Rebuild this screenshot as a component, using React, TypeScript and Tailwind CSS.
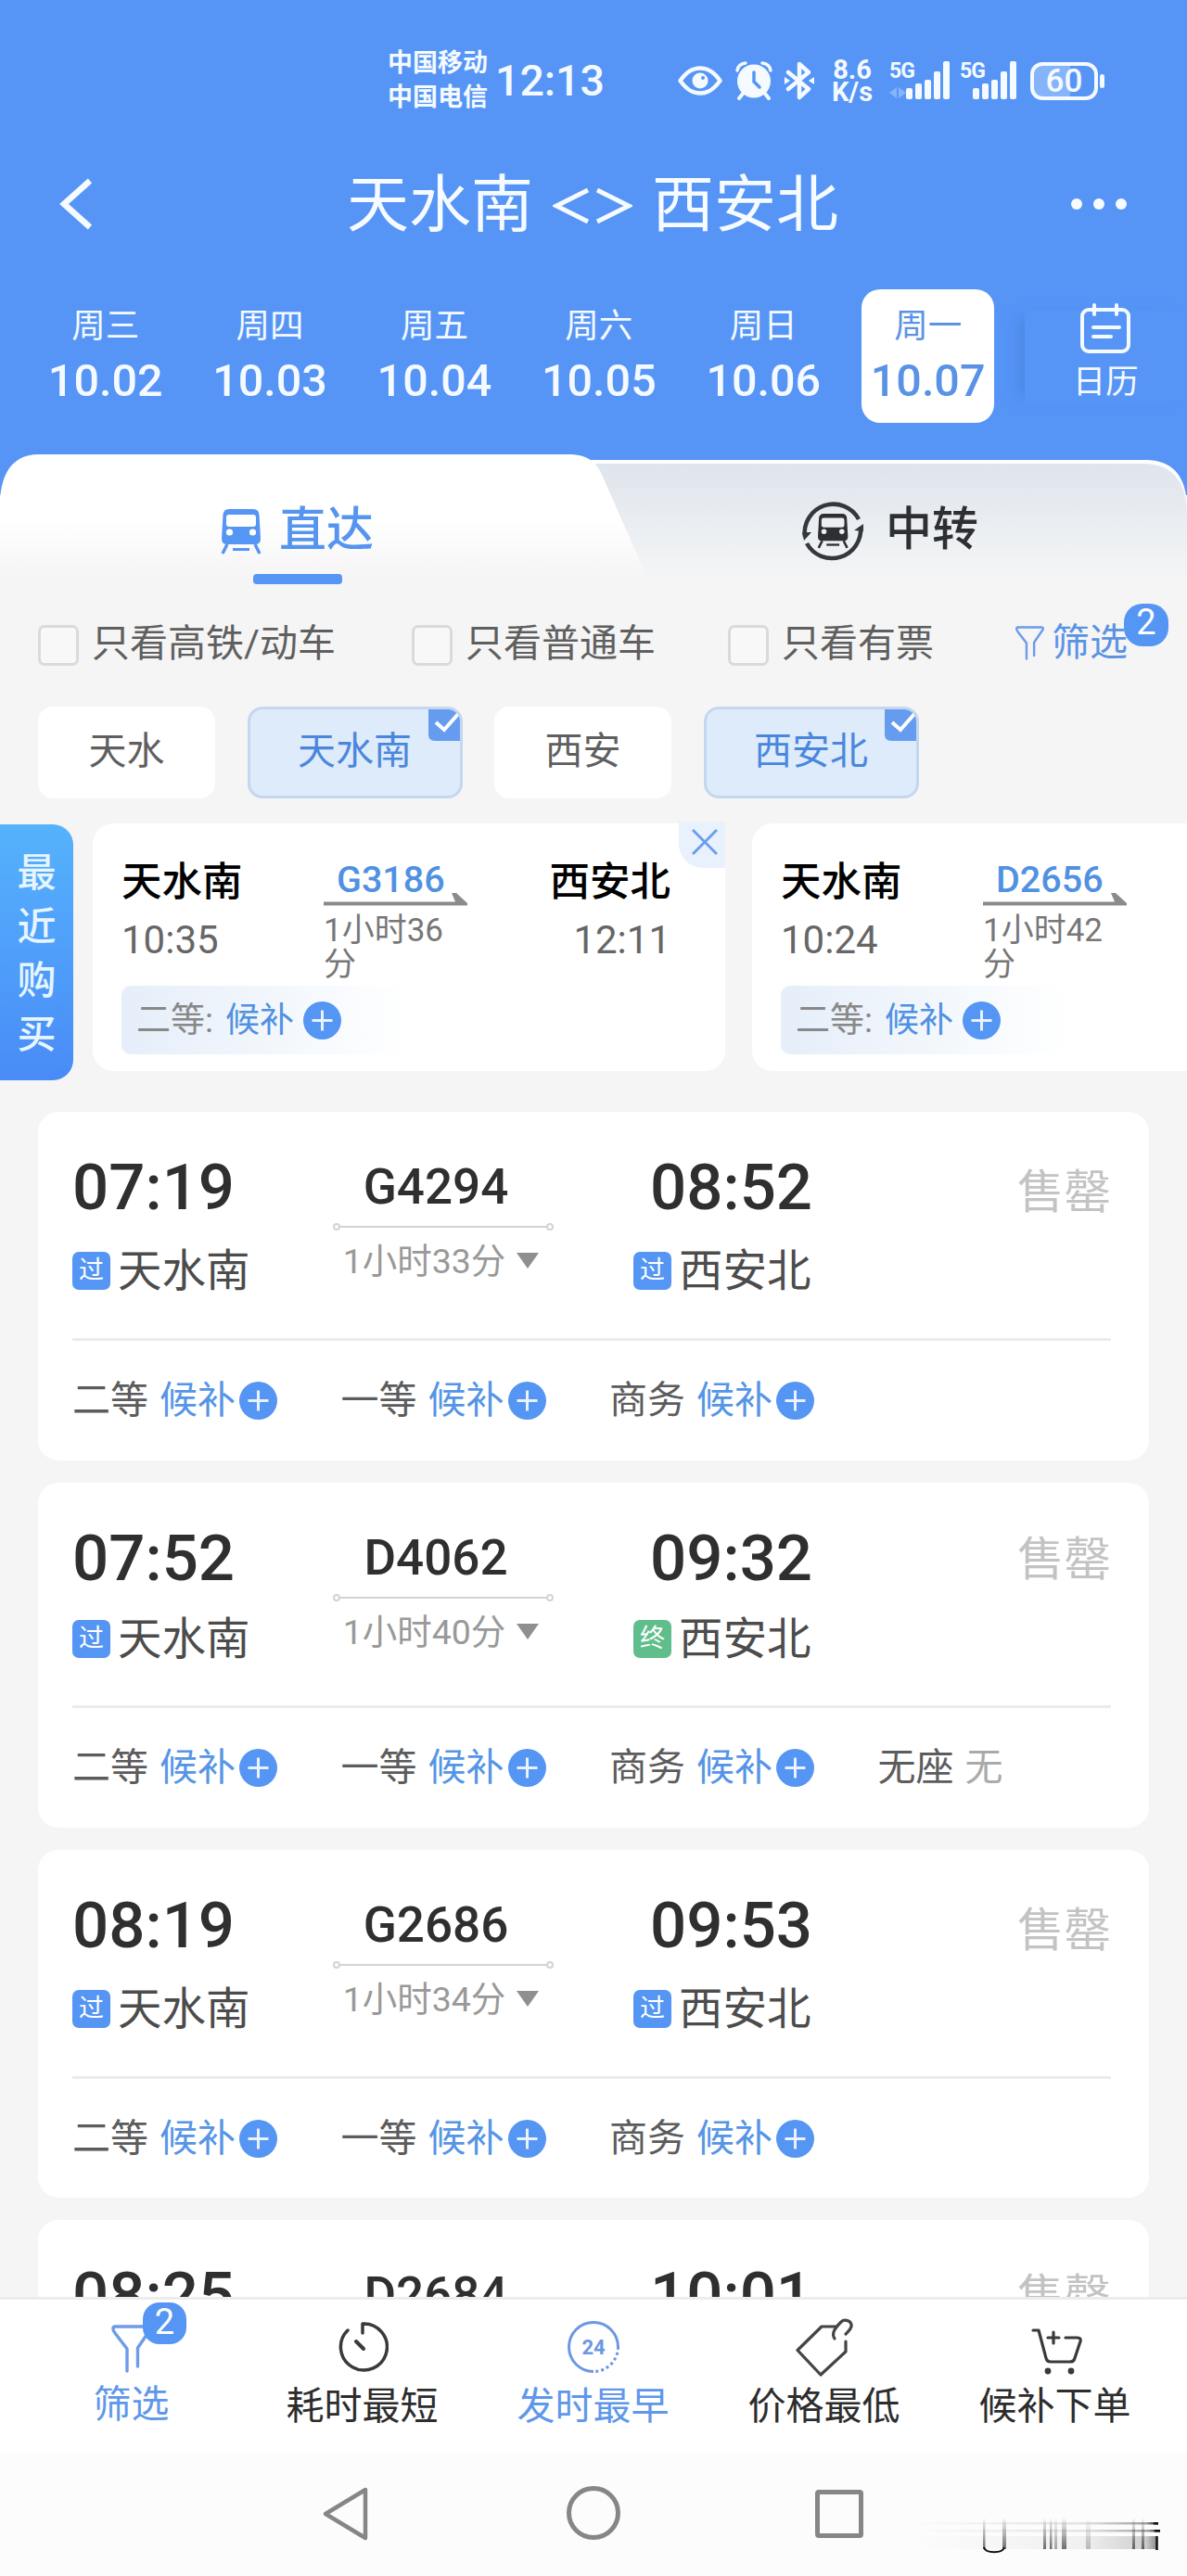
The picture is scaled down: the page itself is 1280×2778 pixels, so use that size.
import { ReactNode } from 'react';

interface Seat {
  name: string;
  waitlist: boolean;
}

interface Train {
  code: string;
  depart: string;
  arrive: string;
  duration: string;
  terminal: boolean;
  compact: boolean;
  height: string;
  seats: Seat[];
}

const baseSeats: Seat[] = [
  { name: '二等', waitlist: true },
  { name: '一等', waitlist: true },
  { name: '商务', waitlist: true },
];

const trains: Train[] = [
  { code: 'G4294', depart: '07:19', arrive: '08:52', duration: '1小时33分', terminal: false, compact: false, height: 'h-[376px]', seats: baseSeats },
  { code: 'D4062', depart: '07:52', arrive: '09:32', duration: '1小时40分', terminal: true, compact: true, height: 'h-[372px]', seats: [...baseSeats, { name: '无座', waitlist: false }] },
  { code: 'G2686', depart: '08:19', arrive: '09:53', duration: '1小时34分', terminal: false, compact: false, height: 'h-[375px]', seats: baseSeats },
  { code: 'D2684', depart: '08:25', arrive: '10:01', duration: '1小时36分', terminal: false, compact: true, height: 'h-[376px]', seats: baseSeats },
];

const days = [
  { week: '周三', date: '10.02' },
  { week: '周四', date: '10.03' },
  { week: '周五', date: '10.04' },
  { week: '周六', date: '10.05' },
  { week: '周日', date: '10.06' },
  { week: '周一', date: '10.07', active: true },
];

const recent = [
  { code: 'G3186', depart: '10:35', arrive: '12:11', duration: '1小时36分', closable: true },
  { code: 'D2656', depart: '10:24', arrive: '12:06', duration: '1小时42分', closable: false },
];

const PlusIcon = () => (
  <svg width="41" height="41" viewBox="0 0 41 41" className="shrink-0">
    <circle cx="20.5" cy="20.5" r="20.5" fill="#5595f3" />
    <path d="M9.5 20.5h22M20.5 9.5v22" stroke="#e9f3ff" strokeWidth="3" />
  </svg>
);

const FunnelIcon = ({ className }: { className: string }) => (
  <svg viewBox="0 0 44 52" fill="none" stroke="#6e9bea" strokeWidth="3.4" strokeLinecap="round" strokeLinejoin="round" className={className}>
    <path d="M17 50V26L4 9C1 5 1.500 2 4 2h36c2 0 3 2 1.500 4L28.500 25v20" />
  </svg>
);

const TrainShape = ({ color, hole }: { color: string; hole: string }) => (
  <g>
    <path d="M8 0h26q6 0 6.500 6L42 32q0 6-6 6H6q-6 0-6-6L1.500 6Q2 0 8 0z" fill={color} />
    <rect x="5" y="6" width="32" height="13" rx="3" fill={hole} />
    <circle cx="8.500" cy="25" r="3.600" fill={hole} />
    <circle cx="33.500" cy="25" r="3.600" fill={hole} />
    <path d="M6 38L1 48M36 38l5 10" stroke={color} strokeWidth="3.400" />
    <path d="M12 43.500h18" stroke={color} strokeWidth="3" />
  </g>
);

const SignalBars = () => (
  <svg width="47" height="42" viewBox="0 0 47 42" fill="#f4faff">
    <rect x="0" y="29" width="7" height="12" rx="2" />
    <rect x="10" y="24" width="7" height="17" rx="2" />
    <rect x="20" y="20" width="7" height="21" rx="2" />
    <rect x="30" y="11" width="7" height="30" rx="2" />
    <rect x="40" y="0" width="7" height="41" rx="2" />
  </svg>
);

const StatusBar = () => (
  <div className="flex h-[152px] items-center pt-[22px] pl-[418px] text-[#f4faff]">
    <div className="w-[110px] text-[27px] leading-[37px] font-bold whitespace-nowrap">
      <div>中国移动</div>
      <div>中国电信</div>
    </div>
    <div className="ml-[6px] w-[124px] text-[46.500px] leading-none font-medium">12:13</div>
    <svg width="48" height="42" viewBox="0 0 48 42" className="ml-[73px]" fill="none">
      <path d="M2.500 21C11 9 18 7.500 24 7.500S37 9 45.500 21C37 33 30 34.500 24 34.500S11 33 2.500 21z" stroke="#f4faff" strokeWidth="4.500" strokeLinejoin="round" />
      <circle cx="24" cy="21" r="8.500" fill="#f4faff" />
      <circle cx="27" cy="18" r="2" fill="#5695f6" />
    </svg>
    <svg width="40" height="42" viewBox="0 0 40 42" className="ml-[14px]" fill="none">
      <circle cx="20" cy="21.500" r="18" fill="#f4faff" />
      <path d="M2 10Q3 3 11 2M38 10Q37 3 29 2" stroke="#f4faff" strokeWidth="3.500" strokeLinecap="round" />
      <path d="M8 35l-4 5M32 35l4 5" stroke="#f4faff" strokeWidth="4" strokeLinecap="round" />
      <path d="M20 12v10l6 6" stroke="#5695f6" strokeWidth="3.500" strokeLinecap="round" />
    </svg>
    <svg width="32" height="42" viewBox="0 0 32 42" className="ml-[13px]" fill="none">
      <path d="M4 12l22 18-10 9V3l10 9L4 30" stroke="#f4faff" strokeWidth="4.500" strokeLinejoin="round" strokeLinecap="round" />
      <path d="M0 17l6 4-6 4zM32 17l-6 4 6 4z" fill="#f4faff" />
    </svg>
    <div className="ml-[16px] w-[50px] text-center text-[29px] leading-[24px] font-bold">
      <div>8.6</div>
      <div>K/s</div>
    </div>
    <div className="relative ml-[15px] flex w-[65px] justify-end">
      <SignalBars />
      <span className="absolute top-[-1px] left-0 text-[23px] leading-[24px] font-bold tracking-[-1px]">5G</span>
      <svg width="18" height="12" viewBox="0 0 18 12" className="absolute bottom-[2px] left-0">
        <path d="M8 0v12L0 6zM10 0v12l8-6z" fill="#86b4fa" />
      </svg>
    </div>
    <div className="relative ml-[11px] flex w-[61px] justify-end">
      <SignalBars />
      <span className="absolute top-[-1px] left-0 text-[23px] leading-[24px] font-bold tracking-[-1px]">5G</span>
    </div>
    <div className="ml-[15px] flex items-center">
      <div className="flex h-[41px] w-[73px] items-center justify-center rounded-[13px] border-4 border-[#f4faff] bg-linear-to-r from-[#86b4fa] from-60% to-[#5695f6] to-60% text-[35px] leading-none font-medium">
        60
      </div>
      <div className="ml-[2px] h-[15px] w-[5px] rounded-full bg-[#f4faff]"></div>
    </div>
  </div>
);

const Header = () => (
  <header className="h-[489px] shrink-0 bg-[#5695f6]">
    <StatusBar />
    <div className="flex h-[136px] items-center pl-[63px] text-[#f6fbff]">
      <svg width="38" height="56" viewBox="0 0 38 56" fill="none" stroke="currentColor" strokeWidth="6.500">
        <path d="M34 3L6 28l28 25" />
      </svg>
      <h1 className="ml-[273px] flex items-center pt-[3px] text-[67px] leading-none">
        <span>天水南</span>
        <svg width="86" height="38" viewBox="0 0 86 38" className="mx-[21px]" fill="none" stroke="currentColor" strokeWidth="5">
          <path d="M38 2L4 19l34 17M48 2l34 17-34 17" />
        </svg>
        <span>西安北</span>
      </h1>
      <div className="mr-[65px] ml-auto flex gap-[12px]">
        <i className="size-[12px] rounded-full bg-current"></i>
        <i className="size-[12px] rounded-full bg-current"></i>
        <i className="size-[12px] rounded-full bg-current"></i>
      </div>
    </div>
    <div className="flex pt-[24px] pl-[25px] text-[#f4faff]">
      {days.map((day) => (
        <div key={day.date} className="flex w-[177.400px] justify-center">
          <div className={`flex h-[144px] w-[143px] flex-col items-center rounded-[20px] pt-[18px] ${day.active ? 'bg-white text-[#5a93e6]' : ''}`}>
            <span className="text-[36.500px] leading-[44px]">{day.week}</span>
            <span className="mt-[12px] text-[48.500px] leading-[50px] font-medium">{day.date}</span>
          </div>
        </div>
      ))}
      <div className="mt-[23px] ml-[16px] h-[100px] w-[174px] shrink-0 bg-[#5695f6] shadow-[-14px_0_16px_-8px_#4a87e2]">
        <div className="flex flex-col items-center">
          <svg width="54" height="54" viewBox="0 0 54 54" fill="none" stroke="currentColor" strokeWidth="4" strokeLinecap="round" className="-mt-[8px]">
            <rect x="2" y="7" width="50" height="45" rx="7" />
            <path d="M15 2v10M39 2v10M14 26h28M14 36h19" />
          </svg>
          <span className="mt-[9px] text-[35.500px] leading-[44px]">日历</span>
        </div>
      </div>
    </div>
  </header>
);

const RouteTabs = () => (
  <div className="relative isolate flex h-[141px] shrink-0 bg-[#5695f6]">
    <svg viewBox="0 0 1280 141" className="absolute inset-0 -z-10 h-full w-full">
      <defs>
        <linearGradient id="tabLeft" x1="0" y1="0" x2="0" y2="1">
          <stop offset="0.500" stopColor="#ffffff" />
          <stop offset="0.960" stopColor="#f5f5f5" />
        </linearGradient>
        <linearGradient id="tabRight" x1="0" y1="0" x2="0" y2="1">
          <stop offset="0" stopColor="#dfe5ed" />
          <stop offset="1" stopColor="#f4f5f6" />
        </linearGradient>
      </defs>
      <rect y="45" width="1280" height="96" fill="#f5f5f5" />
      <path d="M500 7H1238Q1280 9 1280 60V141H500z" fill="#fff" />
      <path d="M500 11H1236Q1277 13 1280 60V134H500z" fill="url(#tabRight)" />
      <path d="M0 50C2 18 16 1 42 1H612C634 1 643 9 649 23L698 134V141H0z" fill="url(#tabLeft)" />
      <rect y="134" width="1280" height="7" fill="#f5f5f5" />
    </svg>
    <div className="relative flex h-[129px] w-[640px] items-center pt-[35px] pl-[238px] text-[#5595f0]">
      <svg width="44" height="50" viewBox="-1 -1 44 50" className="mt-[3px]">
        <TrainShape color="#5595f3" hole="#ffffff" />
      </svg>
      <span className="ml-[19px] text-[51px] leading-none font-medium">直达</span>
      <i className="absolute bottom-[-12px] left-[273px] h-[11px] w-[96px] rounded-[4px] bg-[#5595f3]"></i>
    </div>
    <div className="flex h-[129px] flex-1 items-center pt-[35px] pl-[224px] text-[#2d2f32]">
      <svg width="68" height="68" viewBox="0 0 68 68" fill="none" className="mt-[3px]">
        <path d="M4 40A31 31 0 0 1 62 21" stroke="#34373b" strokeWidth="4.500" />
        <path d="M64 29A31 31 0 0 1 6 47" stroke="#34373b" strokeWidth="4.500" />
        <path d="M1 35l10 0-8 9zM67 26v8l-10-1z" fill="#34373b" />
        <g transform="translate(18 15) scale(0.770)">
          <TrainShape color="#2d2f32" hole="#eceff3" />
        </g>
      </svg>
      <span className="ml-[23px] text-[50px] leading-none font-medium">中转</span>
    </div>
  </div>
);

const CheckOption = ({ label, className }: { label: string; className: string }) => (
  <label className={`flex items-center ${className}`}>
    <i className="mr-[14px] size-[44px] rounded-[7px] border-[3px] border-[#dadada] bg-[#f8f8f8]"></i>
    <span className="pb-[3px]">{label}</span>
  </label>
);

const FilterBar = () => (
  <div className="flex h-[132px] shrink-0 items-center pl-[41px] text-[41px] leading-none text-[#5f5f5f]">
    <CheckOption label="只看高铁/动车" className="w-[403px]" />
    <CheckOption label="只看普通车" className="w-[341px]" />
    <CheckOption label="只看有票" className="w-[309px]" />
    <div className="relative flex items-center pb-[5px] text-[#5a93e4]">
      <FunnelIcon className="h-[37px] w-[33px]" />
      <span className="ml-[7px]">筛选</span>
      <span className="absolute -top-[22px] left-[118px] flex h-[46px] w-[48px] items-center justify-center rounded-[20px] bg-[#5595f3] pb-[6px] text-[38px] text-white">2</span>
    </div>
  </div>
);

const Chip = ({ label, active }: { label: string; active?: boolean }) =>
  active ? (
    <div className="relative flex h-[99px] w-[232px] justify-center overflow-hidden rounded-[16px] border-[3px] border-[#c4d7ee] bg-[#deebfa] pt-[23px] text-[#4a87dc]">
      {label}
      <svg width="34" height="34" viewBox="0 0 34 34" className="absolute top-0 right-0">
        <path d="M0 0h34v34H7q-7 0-7-7z" fill="#669cf0" />
        <path d="M8 14l9 8L32 5" fill="none" stroke="#fff" strokeWidth="4" />
      </svg>
    </div>
  ) : (
    <div className="flex h-[99px] w-[191px] justify-center rounded-[16px] bg-white pt-[26px] text-[#5f5f5f]">{label}</div>
  );

const RecentCard = ({ item }: { item: (typeof recent)[number] }) => (
  <div className="relative h-[267px] w-[682px] shrink-0 rounded-[22px] bg-white pt-[41px] pr-[59px] pl-[31px]">
    {item.closable && (
      <div className="absolute -top-[2px] right-0 flex h-[50px] w-[50px] items-center justify-center rounded-bl-[26px] bg-[#e9f1fd] pb-[6px] pl-[5px]">
        <svg width="28" height="28" viewBox="0 0 28 28" stroke="#6a9eee" strokeWidth="3">
          <path d="M1 1l26 26M27 1L1 27" />
        </svg>
      </div>
    )}
    <div className="flex h-[134px]">
      <div className="w-[218px]">
        <div className="text-[43.500px] leading-[46px] font-medium text-black">天水南</div>
        <div className="mt-[16px] text-[42px] leading-[46px] text-[#666]">{item.depart}</div>
      </div>
      <div className="w-[155px]">
        <div className="pl-[14px] text-[39.500px] leading-[40px] font-medium text-[#5091e2]">{item.code}</div>
        <svg width="155" height="14" viewBox="0 0 155 14" className="-mt-[6px]">
          <path d="M0 9.500H142L138 0h5l12 11v2.500H0z" fill="#8b8b8b" />
        </svg>
        <div className="mt-[8px] w-[130px] text-[35px] leading-[37px] break-all text-[#777]">{item.duration}</div>
      </div>
      <div className="flex-1 text-right">
        <div className="text-[43.500px] leading-[46px] font-medium text-black">西安北</div>
        <div className="mt-[16px] text-[42px] leading-[46px] text-[#666]">{item.arrive}</div>
      </div>
    </div>
    <div className="flex h-[74px] w-[310px] items-center rounded-[10px] bg-linear-to-r from-[#e5eef9] to-white pl-[16px] text-[37px] leading-none">
      <span className="text-[#888]">二等:</span>
      <span className="ml-[13px] text-[#5091e2]">候补</span>
      <span className="ml-[10px]">
        <PlusIcon />
      </span>
    </div>
  </div>
);

const RecentPurchases = () => (
  <div className="flex h-[311px] shrink-0 items-start overflow-hidden pt-[27px]">
    <div className="mt-[1px] flex h-[276px] w-[79px] shrink-0 flex-col items-center rounded-r-[22px] bg-linear-to-b from-[#56b2fc] to-[#498bf7] pt-[24px] text-[42px] leading-[58px] font-medium text-[#e6f5ff]">
      {['最', '近', '购', '买'].map((char) => (
        <span key={char}>{char}</span>
      ))}
    </div>
    <div className="ml-[21px] flex gap-[29px]">
      {recent.map((item) => (
        <RecentCard key={item.code} item={item} />
      ))}
    </div>
  </div>
);

const Station = ({ name, terminal }: { name: string; terminal?: boolean }) => (
  <div className="flex h-[48px] items-center">
    <span className={`flex size-[41px] items-center justify-center rounded-[7px] text-[27px] leading-none text-white ${terminal ? 'bg-[#5fbe8b]' : 'bg-[#5595f3]'}`}>
      {terminal ? '终' : '过'}
    </span>
    <span className="mt-[1px] ml-[8px] text-[47.500px] leading-[48px] text-[#4c4c4c]">{name}</span>
  </div>
);

const TrainCard = ({ train }: { train: Train }) => (
  <div className={`shrink-0 rounded-[22px] bg-white pr-[41px] pl-[37px] ${train.height}`}>
    <div className={`flex border-b-[3px] border-[#ebebeb] pt-[47px] ${train.compact ? 'h-[243px]' : 'h-[247px]'}`}>
      <div className="w-[281px]">
        <div className="text-[69px] leading-[70px] font-medium text-[#2f2f2f]">{train.depart}</div>
        <div className={train.compact ? 'mt-[27px]' : 'mt-[30px]'}>
          <Station name="天水南" />
        </div>
      </div>
      <div className="flex w-[238px] flex-col items-center">
        <div className="pr-[16px] text-[53px] leading-[68px] font-medium text-[#2f2f2f]">{train.code}</div>
        <svg width="238" height="8" viewBox="0 0 238 8" fill="#fff" stroke="#d3d3d3" strokeWidth="2" className="mt-[5px]">
          <path d="M6 4h226" />
          <circle cx="4" cy="4" r="3" />
          <circle cx="234" cy="4" r="3" />
        </svg>
        <div className="mt-[11px] flex items-center pr-[4px] text-[37.500px] leading-[44px] text-[#999]">
          <span>{train.duration}</span>
          <svg width="26" height="18" viewBox="0 0 24 18" className="ml-[11px]">
            <path d="M0 0h24L12 17z" fill="#8f8f8f" />
          </svg>
        </div>
      </div>
      <div className="ml-[86px]">
        <div className="pl-[18px] text-[69px] leading-[70px] font-medium text-[#2f2f2f]">{train.arrive}</div>
        <div className={train.compact ? 'mt-[27px]' : 'mt-[30px]'}>
          <Station name="西安北" terminal={train.terminal} />
        </div>
      </div>
      <div className={`ml-auto text-[50.500px] leading-[50px] text-[#c3c3c3] ${train.compact ? 'mt-[11px]' : 'mt-[15px]'}`}>售罄</div>
    </div>
    <div className="flex items-center pt-[42px] text-[41px] leading-[44px] text-[#5c5c5c]">
      {train.seats.map((seat) => (
        <div key={seat.name} className="flex w-[289.500px] shrink-0 items-center">
          <span>{seat.name}</span>
          {seat.waitlist ? (
            <>
              <span className="mr-[4px] ml-[12px] text-[#5595e6]">候补</span>
              <PlusIcon />
            </>
          ) : (
            <span className="ml-[12px] text-[#aaa]">无</span>
          )}
        </div>
      ))}
    </div>
  </div>
);

const SortItem = ({ icon, label, active }: { icon: ReactNode; label: string; active?: boolean }) => (
  <div className={`flex w-[249px] flex-col items-center ${active ? 'text-[#5f97ea]' : 'text-[#2d2d2d]'}`}>
    <div className="flex h-[70px] items-center">{icon}</div>
    <span className="mt-[6px] text-[41px] leading-[46px]">{label}</span>
  </div>
);

const SortBar = () => (
  <div className="flex h-[168px] shrink-0 border-t-[3px] border-[#ececec] bg-white pt-[16px] pl-[17px]">
    <div className="relative -mt-[2px]">
      <SortItem active label="筛选" icon={<FunnelIcon className="mt-[8px] h-[52px] w-[44px]" />} />
      <span className="absolute -top-[11px] left-[137px] flex h-[45px] w-[47px] items-center justify-center rounded-[18px] bg-[#5595f3] pb-[4px] text-[38px] leading-none text-white">2</span>
    </div>
    <SortItem
      label="耗时最短"
      icon={
        <svg width="56" height="56" viewBox="0 0 56 56" fill="none" stroke="#3a3a3a" strokeWidth="3.500" strokeLinecap="round" strokeLinejoin="round">
          <path d="M28 13V3A25 25 0 1 1 12 10" />
          <path d="M21 22l8 8" strokeWidth="4" />
        </svg>
      }
    />
    <SortItem
      active
      label="发时最早"
      icon={
        <svg width="58" height="58" viewBox="0 0 58 58" fill="none" stroke="#6c97e6" strokeWidth="3">
          <path d="M29 55.500A26.500 26.500 0 1 1 55.500 29" />
          <path d="M55.500 29A26.500 26.500 0 0 1 29 55.500" strokeDasharray="3 3" />
          <text x="29" y="36.500" textAnchor="middle" fontSize="22" fontWeight="700" fill="#6c97e6" stroke="none">24</text>
        </svg>
      }
    />
    <SortItem
      label="价格最低"
      icon={
        <svg width="64" height="64" viewBox="0 0 64 64" fill="none" stroke="#454545" strokeWidth="3.200" strokeLinecap="round" strokeLinejoin="round">
          <path d="M45 10H29L3 35.500 28 62 55 37V26" />
          <path d="M43 23C39 17 44 11 50 5C54 1 62 4 61 10C60 14 57 16 55 18" />
        </svg>
      }
    />
    <SortItem
      label="候补下单"
      icon={
        <svg width="56" height="52" viewBox="0 0 56 52" fill="none" stroke="#3a3a3a" strokeWidth="3.200" strokeLinecap="round" strokeLinejoin="round" className="mt-[8px] ml-[4px]">
          <path d="M2 4h6l8 30q1 4 5 4h21q4 0 5-4l6-18q1-4-3-4H37" />
          <path d="M24 6v12M18 12h12" />
          <circle cx="18" cy="48" r="1.800" fill="#3a3a3a" />
          <circle cx="43" cy="48" r="1.800" fill="#3a3a3a" />
        </svg>
      }
    />
  </div>
);

const SystemNav = () => (
  <div className="relative flex h-[133px] shrink-0 items-start bg-[#fcfcfc] pt-[36px] pl-[347px]">
    <svg width="52" height="60" viewBox="0 0 52 60" fill="none" stroke="#868686" strokeWidth="4.500" strokeLinejoin="round">
      <path d="M47 4v52L4 30z" />
    </svg>
    <i className="ml-[212px] size-[58px] rounded-full border-[5px] border-[#868686]"></i>
    <i className="mt-[4px] ml-[210px] size-[52px] rounded-[4px] border-[5px] border-[#868686]"></i>
    <svg width="270" height="42" viewBox="0 0 270 42" fill="none" className="absolute top-[68px] left-[983px]">
      <defs>
        <linearGradient id="streakX" x1="0" y1="0" x2="1" y2="0">
          <stop offset="0" stopColor="#000" stopOpacity="0" />
          <stop offset="0.700" stopColor="#000" stopOpacity="0.100" />
          <stop offset="0.950" stopColor="#000" stopOpacity="0.350" />
          <stop offset="1" stopColor="#000" stopOpacity="0.900" />
        </linearGradient>
        <linearGradient id="streakY" x1="0" y1="0" x2="0" y2="1">
          <stop offset="0" stopColor="#000" stopOpacity="0" />
          <stop offset="1" stopColor="#000" stopOpacity="0.550" />
        </linearGradient>
      </defs>
      <g fill="url(#streakX)">
        <rect y="7" width="266" height="2.500" />
        <rect y="15" width="268" height="2.500" />
        <rect y="22" width="265" height="14" opacity="0.500" />
      </g>
      <path d="M261 8.300h5M262 16.300h6M264.500 22v15" stroke="#111" strokeWidth="2.500" />
      <g fill="url(#streakY)">
        <rect x="77" y="2" width="2.500" height="34" />
        <rect x="98" y="2" width="4" height="34" />
        <rect x="142" y="2" width="3" height="34" />
        <rect x="149" y="2" width="2.500" height="34" />
        <rect x="154" y="2" width="3" height="34" opacity="0.600" />
        <rect x="162" y="2" width="5" height="34" />
        <rect x="188" y="2" width="5" height="34" opacity="0.400" />
        <rect x="238" y="2" width="3" height="34" />
        <rect x="248" y="2" width="3" height="34" />
      </g>
      <path d="M78 34c2 7 20 7 22 0" stroke="#111" strokeWidth="2" />
    </svg>
  </div>
);

const App = () => (
  <div className="flex h-[2778px] w-[1280px] flex-col overflow-hidden bg-[#f5f5f5] font-[Roboto,'Noto_Sans_CJK_SC',sans-serif]">
    <Header />
    <RouteTabs />
    <FilterBar />
    <div className="flex shrink-0 gap-[34.500px] pl-[41px] text-[41px] leading-[44px]">
      <Chip label="天水" />
      <Chip label="天水南" active />
      <Chip label="西安" />
      <Chip label="西安北" active />
    </div>
    <RecentPurchases />
    <main className="flex min-h-0 flex-1 flex-col gap-[24px] overflow-hidden pt-[27px] pr-[41px] pl-[41px]">
      {trains.map((train) => (
        <TrainCard key={train.code} train={train} />
      ))}
    </main>
    <SortBar />
    <SystemNav />
  </div>
);

export default App;
